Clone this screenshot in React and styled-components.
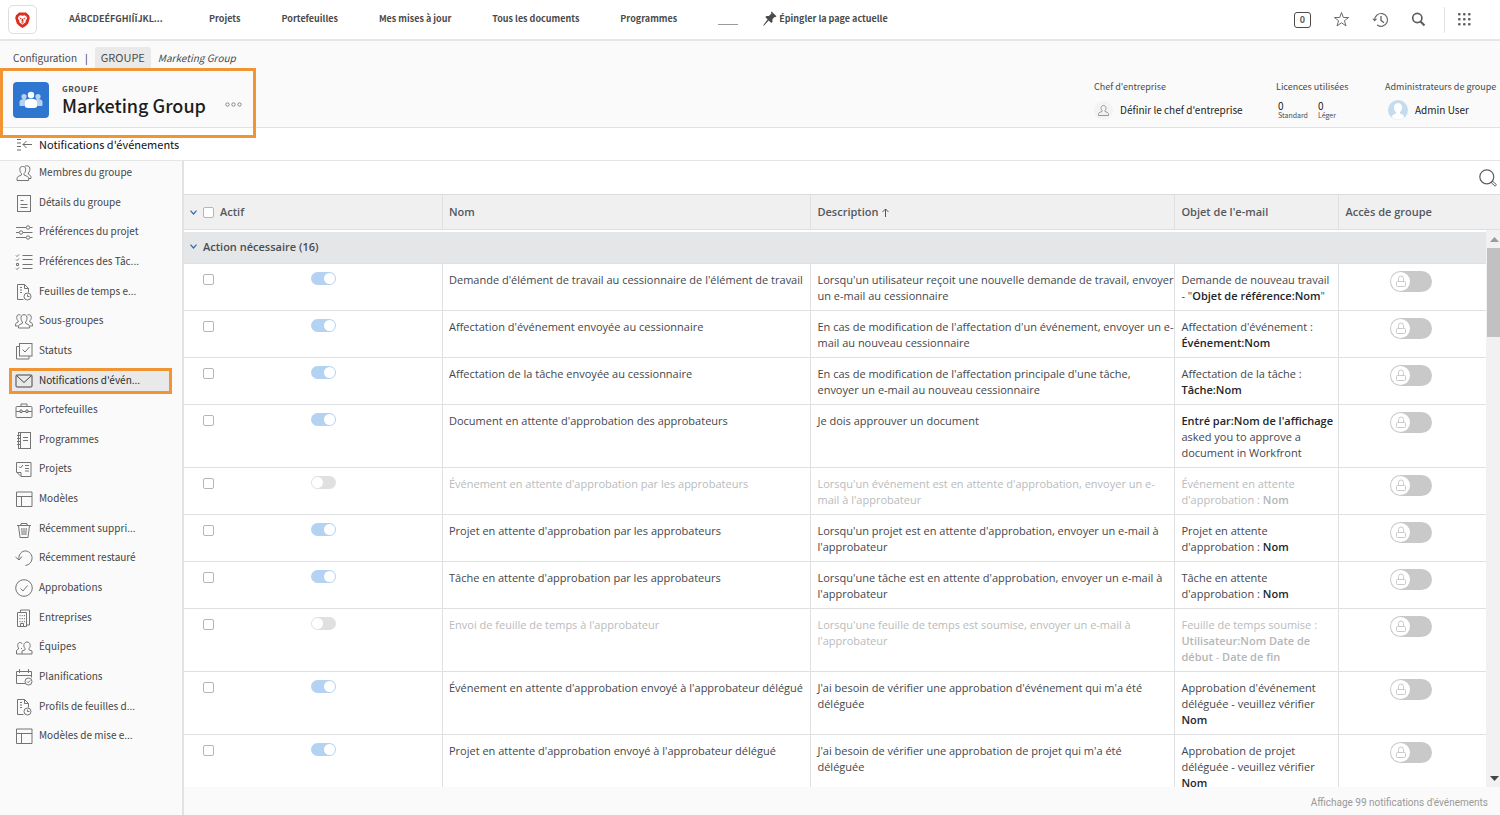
import React from "react";
import styled, { createGlobalStyle, css } from "styled-components";

const uiFont = '"Noto Sans CJK SC", "Open Sans", sans-serif';
const tableFont = '"Open Sans", "Noto Sans", sans-serif';
const accent = "#f19434";

const GlobalStyle = createGlobalStyle`
  *, *::before, *::after { box-sizing: border-box; }
  body { margin: 0; font-family: ${uiFont}; color: #323232; background: #fff; }
  button, input { font: inherit; color: inherit; }
  button { border: 0; background: none; padding: 0; cursor: pointer; }
  a { color: inherit; text-decoration: none; }
  ul, h1, h2, p { margin: 0; padding: 0; }
  ul { list-style: none; }
  svg { display: block; flex: none; }
`;

const Page = styled.div`
  display: flex;
  flex-direction: column;
  height: 100vh;
  overflow: hidden;
`;

const TopBar = styled.header`
  display: flex;
  align-items: center;
  flex: none;
  height: 41px;
  padding: 0 29px 0 8px;
  border-bottom: 2px solid #e6e6e6;
  background: #fff;
`;

const LogoLink = styled.a`
  display: flex;
  align-items: center;
  justify-content: center;
  width: 29px;
  height: 29px;
  margin-right: 32px;
  border: 1px solid #dedede;
  border-radius: 5px;
`;

const TopNav = styled.nav`
  display: flex;
  align-items: center;
  gap: 41px;
  padding-bottom: 2px;
  font-size: 9px;
  line-height: 16px;
  font-weight: 700;
  color: #4b4b4b;
  white-space: nowrap;
`;

const TopLink = styled.a`
  min-width: ${(p) => p.$min || 0}px;
`;

const PinButton = styled.button`
  display: flex;
  align-items: center;
  gap: 2px;
  margin-left: -16px;
  font-weight: 700;
`;

const EmptyPin = styled.a`
  width: 20px;
  height: 12px;
  border-bottom: 1px solid #9a9a9a;
`;

const TopTools = styled.div`
  display: flex;
  align-items: center;
  gap: 22px;
  margin-left: auto;
  color: #5e5e5e;
`;

const CounterButton = styled.button`
  width: 17px;
  height: 16px;
  border: 1px solid #4b4b4b;
  border-radius: 3px;
  font-size: 9px;
  line-height: 13px;
  font-weight: 700;
`;

const Divider = styled.span`
  width: 1px;
  height: 26px;
  background: #e3e3e3;
  margin: 0 -9px 0 -4px;
`;

const ObjectHeader = styled.section`
  display: flex;
  flex: none;
  justify-content: space-between;
  height: 87px;
  border-bottom: 1px solid #e1e1e1;
  background: #fafafa;
`;

const Identity = styled.div`
  display: flex;
  flex-direction: column;
`;

const Breadcrumb = styled.nav`
  display: flex;
  align-items: center;
  flex: none;
  height: 27px;
  padding: 6px 0 0 13px;
  font-size: 10px;
  line-height: 21px;
  color: #4b4b4b;
  white-space: nowrap;
`;

const Separator = styled.span`
  margin: 0 7px 0 8px;
  color: #222;
`;

const CrumbType = styled.span`
  padding: 0 6px;
  margin-right: 7px;
  border-radius: 3px 3px 0 0;
  background: #e9e9e9;
  font-size: 11px;
`;

const TitleRow = styled.div`
  position: relative;
  display: flex;
  align-items: center;
  flex: 1;
  width: 256px;
  padding: 5px 14px 0 13px;
`;

const Highlight = styled.span`
  position: absolute;
  inset: ${(p) => p.$inset};
  border: 3px solid ${accent};
  pointer-events: none;
  z-index: 2;
`;

const GroupBadge = styled.span`
  display: flex;
  align-items: center;
  justify-content: center;
  width: 36px;
  height: 36px;
  border-radius: 4px;
  background: #2f76d0;
`;

const TitleText = styled.div`
  margin-left: 13px;
`;

const Kicker = styled.p`
  font-size: 8px;
  line-height: 10px;
  font-weight: 700;
  letter-spacing: 0.5px;
  color: #4b4b4b;
`;

const Title = styled.h1`
  font-size: 18px;
  line-height: 22px;
  font-weight: 500;
  color: #1d1d1d;
  white-space: nowrap;
`;

const MoreButton = styled.button`
  margin: 8px 0 0 auto;
`;

const Facts = styled.div`
  display: flex;
  align-items: flex-start;
  padding: 38px 8px 0 0;
`;

const Fact = styled.div`
  width: ${(p) => p.$width}px;
`;

const FactLabel = styled.p`
  font-size: 9px;
  line-height: 16px;
  color: #4b4b4b;
  white-space: nowrap;
`;

const FactValue = styled.div`
  display: flex;
  align-items: center;
  gap: 7px;
  height: 30px;
  padding-left: ${(p) => p.$indent || 0}px;
  font-size: 10px;
  line-height: 16px;
  color: #222;
  white-space: nowrap;
`;

const License = styled.div`
  width: 33px;
  font-size: 7px;
  line-height: 9px;
  color: #4b4b4b;

  strong {
    display: block;
    font-size: 10px;
    line-height: 11px;
    font-weight: 400;
    color: #222;
  }
`;

const SectionBar = styled.div`
  display: flex;
  align-items: center;
  flex: none;
  gap: 6px;
  height: 33px;
  padding: 0 16px;
  border-bottom: 1px solid #e4e4e4;
`;

const SectionTitle = styled.h2`
  padding-bottom: 1px;
  font-size: 11px;
  line-height: 18px;
  font-weight: 400;
  color: #111;
`;

const Workspace = styled.div`
  display: flex;
  flex: 1;
  min-height: 0;
`;

const Sidebar = styled.nav`
  flex: none;
  width: 184px;
  padding: 0 11px 0 10px;
  border-right: 2px solid #e1e2e4;
  background: #fafafa;
`;

const SideList = styled.ul`
  display: grid;
  grid-template-rows: repeat(20, 1fr);
  height: 593px;
`;

const SideLink = styled.a`
  position: relative;
  display: flex;
  align-items: center;
  height: 24px;
  padding-left: 5px;
  font-size: 10px;
  line-height: 16px;
  color: ${(p) => (p.$active ? "#2c2c2c" : "#454545")};
  background: ${(p) => (p.$active ? "#e9e9e9" : "transparent")};
  white-space: nowrap;

  svg {
    width: 18px;
    height: 18px;
    margin-right: 6px;
    fill: none;
    stroke: ${(p) => (p.$active ? "#444" : "#747474")};
    stroke-width: 1;
  }
`;

const SideLabel = styled.span`
  padding-bottom: 2px;
`;

const Main = styled.main`
  display: flex;
  flex-direction: column;
  flex: 1;
  min-width: 0;
  font-family: ${tableFont};
`;

const Toolbar = styled.div`
  display: flex;
  flex: none;
  align-items: center;
  justify-content: flex-end;
  height: 33px;
  padding-right: 3px;
`;

const TablePane = styled.div`
  position: relative;
  flex: 1;
  min-height: 0;
  overflow: hidden;
  border-top: 1px solid #dcdcdc;
`;

const Table = styled.table`
  width: 100%;
  table-layout: fixed;
  border-collapse: separate;
  border-spacing: 0;
  font-size: 11px;
  line-height: 16px;
  color: #43474d;
`;

const HeadCell = styled.th`
  height: 35px;
  padding: 0 6px;
  border-right: 1px solid #dfdfdf;
  border-bottom: 1px solid #dfdfdf;
  background: #f0f0f0;
  color: #54585d;
  font-weight: 600;
  text-align: left;

  &:last-child { border-right: 0; }
`;

const HeadInner = styled.span`
  display: flex;
  align-items: center;
  gap: ${(p) => p.$gap || 6}px;
`;

const GroupCell = styled.th`
  height: 34px;
  padding: 0 6px 2px;
  border-top: 2px solid #fff;
  border-bottom: 1px solid #dfe0e2;
  background: #e5e6e8;
  color: #4a4d52;
  font-weight: 600;
  text-align: left;
`;

const Row = styled.tr`
  strong { font-weight: 600; }
  ${(p) => p.$off && css`
    color: #b9bbbd;
    strong { color: #b4b6b8; }
  `}
  ${(p) => !p.$off && css`
    strong { color: #22262b; }
  `}
`;

const Cell = styled.td`
  padding: 8px 0 6px 6px;
  border-right: 1px solid #dfe0e2;
  border-bottom: 1px solid #dfe0e2;
  vertical-align: top;
  white-space: pre-line;

  &:last-child { border-right: 0; }
`;

const ActiveControls = styled.div`
  display: grid;
  grid-template-columns: 108px auto;
  align-items: start;
  padding-left: 13px;
`;

const CheckBox = styled.input.attrs({ type: "checkbox" })`
  appearance: none;
  display: block;
  width: 11px;
  height: 11px;
  margin: ${(p) => (p.$inRow ? "2px 0 0" : "0")};
  border: 1px solid #b4b6b8;
  border-radius: 2px;
  background: #fff;
`;

const Switch = styled.input.attrs({ type: "checkbox", role: "switch" })`
  appearance: none;
  display: block;
  position: relative;
  width: 25px;
  height: 13px;
  margin: 0;
  border-radius: 7px;
  background: #e0e0e0;

  &::after {
    content: "";
    position: absolute;
    top: 1px;
    left: 1px;
    width: 11px;
    height: 11px;
    border-radius: 50%;
    background: #fff;
  }
  &:checked { background: #b4d2f1; }
  &:checked::after { left: 13px; }
`;

const LockLabel = styled.label`
  position: relative;
  display: block;
  width: 42px;
  height: 21px;
  margin: -1px 0 0 45px;

  svg {
    position: absolute;
    top: 4px;
    left: 5px;
  }
`;

const LockSwitch = styled(Switch)`
  width: 42px;
  height: 21px;
  border-radius: 11px;
  background: #c9c9c9;

  &::after {
    width: 19px;
    height: 19px;
  }
`;

const ScrollTrack = styled.div`
  position: absolute;
  top: 35px;
  right: 0;
  bottom: 0;
  display: flex;
  flex-direction: column;
  justify-content: space-between;
  width: 14px;
  background: #f1f1f1;
`;

const ScrollArrow = styled.button`
  display: flex;
  align-items: center;
  justify-content: center;
  width: 16px;
  height: 18px;
`;

const ScrollThumb = styled.div`
  height: 89px;
  margin: 0 0 auto 1px;
  background: #c1c1c1;
`;

const Footer = styled.footer`
  flex: none;
  height: 28px;
  padding: 8px 12px 0;
  background: #fafafa;
  color: #999;
  font-family: Roboto, sans-serif;
  font-size: 10px;
  line-height: 16px;
  text-align: right;
`;

const icons = {
  members: <><path d="M6.500 9.600C5 8.500 4.600 5.800 5 4c.5-2 5-2 5.500 0 .4 1.800 0 4.500-1.500 5.600v1.300l3.500 1.600c1 .5 1.200 1.300 1.200 4H2c0-2.700.2-3.500 1.200-4l3.300-1.600z"/><path d="M10 2.200c2-1 4.500-.2 4.800 1.800.3 1.900-.2 3.900-1.500 5v1.200l1.500 1c1 .5 1.200 1.200 1.200 3.300h-2.300"/></>,
  details: <><rect x="2.500" y="1.500" width="13" height="16"/><path d="M5.500 6.500h3M5.500 10.500h7M5.500 13.500h7"/></>,
  sliders: <><path d="M1 4.500h10M15 4.500h2.500M1 9.500h3M8 9.500h9.500M1 14.500h10M15 14.500h2.500"/><circle cx="13" cy="4.500" r="1.700"/><circle cx="6" cy="9.500" r="1.700"/><circle cx="13" cy="14.500" r="1.700"/></>,
  tasks: <path d="M7.500 2.500h10M7.500 6.500h10M7.500 11.500h10M7.500 15.500h10M1 2.500l1 1 2-2M1 6.500l1 1 2-2M1.500 10.500h2v2h-2zM1 15.500l1 1 2-2"/>,
  timesheet: <><path d="M8.500 16.500h-6v-15h7l4 4v4M9.500 1.500v4h4M5 4.500h2M5 7h2M5 9.500h2"/><circle cx="12.500" cy="13.500" r="3.500"/><path d="M12.500 11.500v2h2"/></>,
  subgroups: <><path d="M7.500 10C6 9 5.500 5.500 6.500 3.800c1-1.500 4-1.500 5 0 1 1.700.5 5.200-1 6.200v1.200l3 1.500c.9.500 1 1.300 1 3.300h-11c0-2 .1-2.800 1-3.300l3-1.500z"/><path d="M5.500 3C3 2 1.500 3.500 1.700 5.500c.1 1.500.5 2.500 1.500 3.300V10L1 11.200c-.7.400-.5 1.200-.5 2.800H3M12.500 3C15 2 16.500 3.500 16.300 5.500c-.1 1.500-.5 2.500-1.500 3.300V10l2.200 1.200c.7.400.5 1.200.5 2.800H15"/></>,
  status: <><rect x="4.500" y="1.500" width="12.500" height="12.500"/><path d="M4.500 4.500h-3v12.500h12.500v-3M7.500 7.500l2.500 2.500 4.500-5"/></>,
  mail: <><rect x="1" y="3" width="16" height="12" rx="1"/><path d="M1.500 3.500l7.500 7 7.500-7"/></>,
  briefcase: <><rect x="1" y="5.500" width="16" height="11" rx="1"/><path d="M6 5.500v-2.500h6v2.500M1 10.500h4M7 10.500h4M13 10.500h4M5 9v2.500h2V9zM11 9v2.500h2V9z"/></>,
  notebook: <><rect x="3.500" y="1.500" width="12" height="16"/><path d="M5.500 1.500v16M2 4.500h3M2 7.500h3M2 10.500h3M2 13.500h3M8 6.500h5M8 9.500h5"/></>,
  project: <><path d="M1.500 12.500V2.500h14.500v14h-10l-4-4h4v4M4 6.500l1.500 1.500 2.500-3M10 5.500h4M10 8.500h4M10 11h4"/></>,
  template: <path d="M1.500 2h15.500v14.500H1.500zM1.500 6.500H17M6.500 6.500v10"/>,
  trash: <path d="M2 5.500h14M6 5.500v-2h6v2M3.500 5.500l1.500 12h8l1.500-12M6.800 8l.4 7M9 8v7M11.200 8l-.4 7"/>,
  restore: <path d="M.5 8l3.500 3 3-3.500M4 10.500C3 5.500 7 1.500 11 2c4 .5 6.500 4 6 8-.5 3.500-3 6-6.500 6.500"/>,
  approve: <><circle cx="9" cy="9" r="8.300"/><path d="M5.500 9.500l2.500 2.500 4.500-5.500"/></>,
  building: <><path d="M2.500 3.500h9v14h-9zM5.500 3V1h9v15h-3M5.500 17v-2.500h3v2.500"/><path strokeDasharray="1.200 1.800" d="M5 6v8M7.200 6v8M9.400 6v8"/></>,
  team: <><path d="M3.500 10C2 8 2.500 4.500 5 4.500c1 0 1.800.5 2.200 1.500M3.500 10v1L1.500 12.500v3.500h5.500M10 10.500c-2-2-1.500-6.500 2-6.500s4 4.500 2 6.500v1.300l3 1.200v3H7v-3l3-1.200z"/><path d="M6.500 10v1"/></>,
  calendar: <><path d="M10 15.500H1.500V3.500h15v6M1.500 7.500h15M4.500 1v4M13.500 1v4"/><circle cx="13.500" cy="13.500" r="3.500"/><path d="M12 13.500l1.200 1.200 2-2.200"/></>,
};

const sideItems = [
  ["members", "Membres du groupe"],
  ["details", "Détails du groupe"],
  ["sliders", "Préférences du projet"],
  ["tasks", "Préférences des Tâc..."],
  ["timesheet", "Feuilles de temps e..."],
  ["subgroups", "Sous-groupes"],
  ["status", "Statuts"],
  ["mail", "Notifications d'évén..."],
  ["briefcase", "Portefeuilles"],
  ["notebook", "Programmes"],
  ["project", "Projets"],
  ["template", "Modèles"],
  ["trash", "Récemment suppri..."],
  ["restore", "Récemment restauré"],
  ["approve", "Approbations"],
  ["building", "Entreprises"],
  ["team", "Équipes"],
  ["calendar", "Planifications"],
  ["timesheet", "Profils de feuilles d..."],
  ["template", "Modèles de mise e..."],
];

const rows = [
  { on: true, name: "Demande d'élément de travail au cessionnaire de l'élément de travail", text: "Lorsqu'un utilisateur reçoit une nouvelle demande de travail, envoyer\nun e-mail au cessionnaire", subject: <>Demande de nouveau travail{"\n"}- "<strong>Objet de référence:Nom</strong>"</> },
  { on: true, name: "Affectation d'événement envoyée au cessionnaire", text: "En cas de modification de l'affectation d'un événement, envoyer un e-\nmail au nouveau cessionnaire", subject: <>Affectation d'événement :{"\n"}<strong>Événement:Nom</strong></> },
  { on: true, name: "Affectation de la tâche envoyée au cessionnaire", text: "En cas de modification de l'affectation principale d'une tâche,\nenvoyer un e-mail au nouveau cessionnaire", subject: <>Affectation de la tâche :{"\n"}<strong>Tâche:Nom</strong></> },
  { on: true, name: "Document en attente d'approbation des approbateurs", text: "Je dois approuver un document", subject: <><strong>Entré par:Nom de l'affichage</strong>{"\n"}asked you to approve a{"\n"}document in Workfront</> },
  { on: false, name: "Événement en attente d'approbation par les approbateurs", text: "Lorsqu'un événement est en attente d'approbation, envoyer un e-\nmail à l'approbateur", subject: <>Événement en attente{"\n"}d'approbation : <strong>Nom</strong></> },
  { on: true, name: "Projet en attente d'approbation par les approbateurs", text: "Lorsqu'un projet est en attente d'approbation, envoyer un e-mail à\nl'approbateur", subject: <>Projet en attente{"\n"}d'approbation : <strong>Nom</strong></> },
  { on: true, name: "Tâche en attente d'approbation par les approbateurs", text: "Lorsqu'une tâche est en attente d'approbation, envoyer un e-mail à\nl'approbateur", subject: <>Tâche en attente{"\n"}d'approbation : <strong>Nom</strong></> },
  { on: false, name: "Envoi de feuille de temps à l'approbateur", text: "Lorsqu'une feuille de temps est soumise, envoyer un e-mail à\nl'approbateur", subject: <>Feuille de temps soumise :{"\n"}<strong>Utilisateur:Nom</strong> <strong>Date de{"\n"}début</strong> - <strong>Date de fin</strong></> },
  { on: true, name: "Événement en attente d'approbation envoyé à l'approbateur délégué", text: "J'ai besoin de vérifier une approbation d'événement qui m'a été\ndéléguée", subject: <>Approbation d'événement{"\n"}déléguée - veuillez vérifier{"\n"}<strong>Nom</strong></> },
  { on: true, name: "Projet en attente d'approbation envoyé à l'approbateur délégué", text: "J'ai besoin de vérifier une approbation de projet qui m'a été\ndéléguée", subject: <>Approbation de projet{"\n"}déléguée - veuillez vérifier{"\n"}<strong>Nom</strong></> },
];

const Chevron = () => (
  <svg width="7" height="5" viewBox="0 0 7 5" fill="none" stroke="#2f68b5" strokeWidth="1.200"><path d="M.5.7l3 3.300 3-3.300" /></svg>
);

const LionLogo = () => (
  <svg width="15" height="16" viewBox="0 0 15 16">
    <path fill="#dc2d1e" d="M4 .5h7l1.200 1.200L14 3.300l.8 2.700-1.600 5.500-2.500 2.500L7.500 16l-3.200-2-2.500-2.500L.2 6 1 3.300l1.800-1.600z" />
    <path fill="#fff" d="M5.200 3.200l2.300.5 2.300-.5 2 1.800.2 1.500-1.500 2.500.2 1.300-1.700 1.200L7.500 12.800 6 11.500l-1.700-1.200.2-1.300L3 6.500 3.200 5z" />
    <path fill="#dc2d1e" d="M4.200 5.600l2.500.7-.9 1.300zM10.800 5.600l-2.500.7.9 1.300zM6.900 6.800h1.200l.5 2.500-1.100.8-1.100-.8zM5.800 10.800l1.700-.6 1.700.6-1.700.8z" />
  </svg>
);

const PinIcon = () => (
  <svg width="14" height="15" viewBox="0 0 14 15"><path fill="#4b4b4b" d="M8.500.5l5 4.800-1.200.9-.8-.3-2.200 2.600.3 2.300-1.300 1.100L5.700 9.500.8 14.700l-.6-.5 4.400-5.800-2.300-2.300 1.200-1.200 2.400.2L8.500 2.600l-.6-.9z" /></svg>
);

const StarIcon = () => (
  <svg width="17" height="17" viewBox="0 0 17 17" fill="none" stroke="#6b6b6b"><path d="M8.500 1.500l1.800 5h5.300l-4.200 3.200 1.600 5.200-4.500-3.100L4 14.900l1.600-5.200L1.400 6.500h5.300z" /></svg>
);

const HistoryIcon = () => (
  <svg width="17" height="16" viewBox="0 0 17 16" fill="none" stroke="#6b6b6b"><path d="M2.700 8a6.400 6.400 0 1 1 2.500 5" strokeWidth="1.200" /><path d="M5.200 13a6.400 6.400 0 0 0 3 1.400" strokeDasharray="1.500 1" /><path d="M9 4v4.300l3 2.500" strokeWidth="1.400" /><path fill="#6b6b6b" stroke="none" d="M.2 6.800h5L2.700 9.600z" /></svg>
);

const GroupIcon = () => (
  <svg width="24" height="18" viewBox="0 0 24 18"><g fill="#b8d2f0"><circle cx="5" cy="5.500" r="2.600" /><circle cx="19" cy="5.500" r="2.600" /><path d="M.5 14v-3c0-2 2-3 4.500-3 1.200 0 2.200.2 3 .7L7 15H2c-1 0-1.500-.3-1.500-1zM23.500 14v-3c0-2-2-3-4.500-3-1.200 0-2.200.2-3 .7L17 15h5c1 0 1.500-.3 1.500-1z" /></g><g fill="#fff"><circle cx="12" cy="4" r="3.200" /><path d="M6 15.500v-4C6 9 8.500 7.700 12 7.700s6 1.300 6 3.800v4c0 1-2 1.500-6 1.500s-6-.5-6-1.500z" /></g></svg>
);

const OwnerIcon = () => (
  <svg width="19" height="19" viewBox="0 0 19 19"><circle cx="9.500" cy="9.500" r="9.500" fill="#f3f3f3" /><path fill="none" stroke="#969696" d="M8 9.500C6.500 8.500 6.500 4.500 9.500 4.500s3 4 1.500 5v1l2.500 1c.8.400 1 1 1 3h-10c0-2 .2-2.600 1-3l2.500-1z" /></svg>
);

const AvatarIcon = () => (
  <svg width="20" height="20" viewBox="0 0 20 20"><circle cx="10" cy="10" r="10" fill="#c5dbee" /><path fill="#fff" d="M8 12C5 10 5 3 10 3s5 7 2 9v1.500l2.500 1c1 .5 1.500 1.500 1.500 3a10 10 0 0 1-12 0c0-1.500.5-2.500 1.500-3l2.500-1z" /></svg>
);

const LockIcon = () => (
  <svg width="12" height="13" viewBox="0 0 12 13" fill="none" stroke="#cacaca"><rect x="1.500" y="6.500" width="9" height="5" rx="1" /><path d="M3.500 6.500V3.500a2.500 2.500 0 0 1 5 0v3" /></svg>
);

export default function App() {
  return (
    <>
      <GlobalStyle />
      <Page>
        <TopBar>
          <LogoLink href="#" aria-label="Accueil"><LionLogo /></LogoLink>
          <TopNav>
            <TopLink href="#" $min={99}>AÁBCDEÉFGHIÍĬJKL...</TopLink>
            <TopLink href="#">Projets</TopLink>
            <TopLink href="#">Portefeuilles</TopLink>
            <TopLink href="#">Mes mises à jour</TopLink>
            <TopLink href="#">Tous les documents</TopLink>
            <TopLink href="#">Programmes</TopLink>
            <EmptyPin href="#" />
            <PinButton><PinIcon />Épingler la page actuelle</PinButton>
          </TopNav>
          <TopTools>
            <CounterButton>0</CounterButton>
            <button aria-label="Favoris"><StarIcon /></button>
            <button aria-label="Récents"><HistoryIcon /></button>
            <button aria-label="Rechercher">
              <svg width="15" height="15" viewBox="0 0 15 15" fill="none" stroke="#5e5e5e" strokeWidth="1.700"><circle cx="6.300" cy="6" r="4.600" /><path d="M9.500 9.500l4 4" strokeWidth="2.200" /></svg>
            </button>
            <Divider />
            <button aria-label="Applications">
              <svg width="13" height="13" viewBox="0 0 13 13" fill="#606060">
                {[0, 5, 10].map((y) => [0, 5, 10].map((x) => <rect key={x + "-" + y} x={x} y={y} width="2.600" height="2.600" rx="1" />))}
              </svg>
            </button>
          </TopTools>
        </TopBar>

        <ObjectHeader>
          <Identity>
            <Breadcrumb>
              <a href="#">Configuration</a>
              <Separator>|</Separator>
              <CrumbType>GROUPE</CrumbType>
              <em>Marketing Group</em>
            </Breadcrumb>
            <TitleRow>
              <GroupBadge><GroupIcon /></GroupBadge>
              <TitleText>
                <Kicker>GROUPE</Kicker>
                <Title>Marketing Group</Title>
              </TitleText>
              <MoreButton aria-label="Plus">
                <svg width="17" height="5" viewBox="0 0 17 5" fill="none" stroke="#8a8a8a"><circle cx="2.500" cy="2.500" r="1.700" /><circle cx="8.500" cy="2.500" r="1.700" /><circle cx="14.500" cy="2.500" r="1.700" /></svg>
              </MoreButton>
              <Highlight $inset="0 0 -11px 0" />
            </TitleRow>
          </Identity>
          <Facts>
            <Fact $width={182}>
              <FactLabel>Chef d'entreprise</FactLabel>
              <FactValue><OwnerIcon />Définir le chef d'entreprise</FactValue>
            </Fact>
            <Fact $width={109}>
              <FactLabel>Licences utilisées</FactLabel>
              <FactValue $indent={2}>
                <License><strong>0</strong>Standard</License>
                <License><strong>0</strong>Léger</License>
              </FactValue>
            </Fact>
            <Fact $width={107}>
              <FactLabel>Administrateurs de groupe</FactLabel>
              <FactValue $indent={3}><AvatarIcon />Admin User</FactValue>
            </Fact>
          </Facts>
        </ObjectHeader>

        <SectionBar>
          <button aria-label="Réduire le menu">
            <svg width="17" height="13" viewBox="0 0 17 13" fill="none" stroke="#6b6b6b"><path d="M1 1.500h4M1 5h4M1 8.500h4M1 12h4" /><path d="M16 6.500H7M10.500 3L7 6.500l3.500 3.500" /></svg>
          </button>
          <SectionTitle>Notifications d'événements</SectionTitle>
        </SectionBar>

        <Workspace>
          <Sidebar>
            <SideList>
              {sideItems.map(([icon, label]) => (
                <li key={label}>
                  <SideLink href="#" $active={icon === "mail"}>
                    <svg viewBox="0 0 18 18">{icons[icon]}</svg>
                    <SideLabel>{label}</SideLabel>
                    {icon === "mail" && <Highlight $inset="-1px" />}
                  </SideLink>
                </li>
              ))}
            </SideList>
          </Sidebar>

          <Main>
            <Toolbar>
              <button aria-label="Filtrer la liste">
                <svg width="18" height="18" viewBox="0 0 18 18" fill="none" stroke="#5c5f63"><circle cx="7.800" cy="7.800" r="7" strokeWidth="1.200" /><path d="M12.300 13.800l1.400-1.500 3.600 3.200c.4.500-.8 1.800-1.400 1.400z" /></svg>
              </button>
            </Toolbar>
            <TablePane>
              <Table>
                <colgroup>
                  <col style={{ width: "19.680%" }} />
                  <col style={{ width: "28%" }} />
                  <col style={{ width: "27.660%" }} />
                  <col style={{ width: "12.460%" }} />
                  <col />
                </colgroup>
                <thead>
                  <tr>
                    <HeadCell><HeadInner><Chevron /><CheckBox aria-label="Tout sélectionner" />Actif</HeadInner></HeadCell>
                    <HeadCell>Nom</HeadCell>
                    <HeadCell>
                      <HeadInner $gap={4}>
                        Description
                        <svg width="7" height="9" viewBox="0 0 7 9" fill="none" stroke="#54585d"><path d="M3.500 9V1M.5 4l3-3 3 3" /></svg>
                      </HeadInner>
                    </HeadCell>
                    <HeadCell>Objet de l'e-mail</HeadCell>
                    <HeadCell>Accès de groupe</HeadCell>
                  </tr>
                </thead>
                <tbody>
                  <tr><GroupCell colSpan={5}><HeadInner><Chevron />Action nécessaire (16)</HeadInner></GroupCell></tr>
                  {rows.map((r) => (
                    <Row key={r.name} $off={!r.on}>
                      <Cell>
                        <ActiveControls>
                          <CheckBox $inRow aria-label={"Sélectionner " + r.name} />
                          <Switch defaultChecked={r.on} aria-label={"Activer " + r.name} />
                        </ActiveControls>
                      </Cell>
                      <Cell>{r.name}</Cell>
                      <Cell>{r.text}</Cell>
                      <Cell>{r.subject}</Cell>
                      <Cell>
                        <LockLabel><LockSwitch aria-label={"Accès de groupe " + r.name} /><LockIcon /></LockLabel>
                      </Cell>
                    </Row>
                  ))}
                </tbody>
              </Table>
              <ScrollTrack>
                <ScrollArrow aria-label="Vers le haut"><svg width="9" height="5" viewBox="0 0 9 5"><path fill="#9a9a9a" d="M4.500 0L9 5H0z" /></svg></ScrollArrow>
                <ScrollThumb />
                <ScrollArrow aria-label="Vers le bas"><svg width="9" height="5" viewBox="0 0 9 5"><path fill="#444" d="M0 0h9L4.500 5z" /></svg></ScrollArrow>
              </ScrollTrack>
            </TablePane>
            <Footer>Affichage 99 notifications d'événements</Footer>
          </Main>
        </Workspace>
      </Page>
    </>
  );
}
